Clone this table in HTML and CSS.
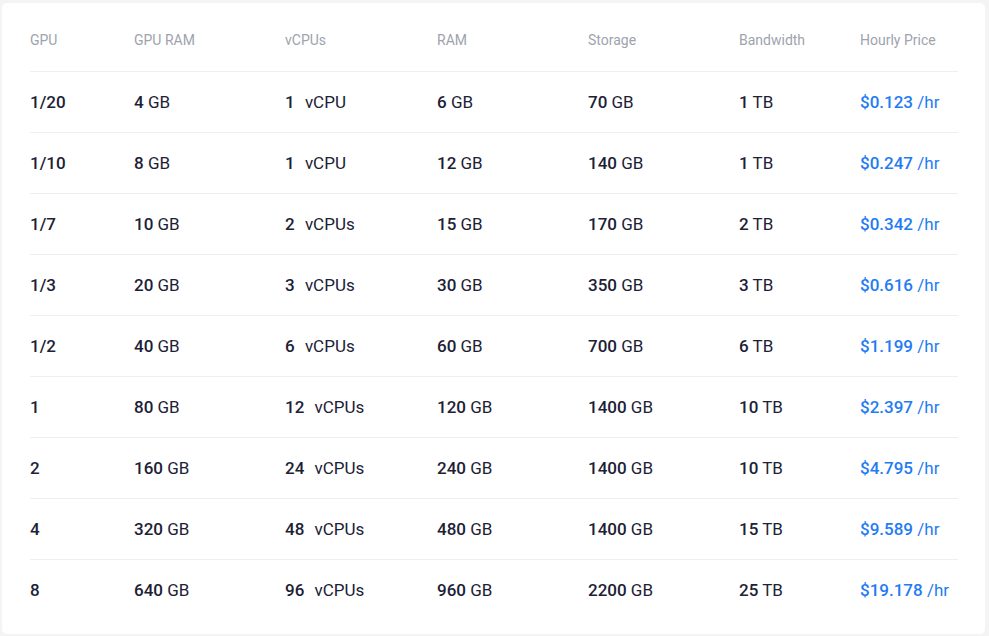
FILE: index.html
```html
<!DOCTYPE html>
<html lang="en">
<head>
<meta charset="utf-8">
<title>GPU Pricing</title>
<link rel="stylesheet" href="styles.css">
</head>
<body>
<div class="card">
  <table class="pricing">
    <colgroup>
      <col class="c-gpu"><col class="c-gram"><col class="c-vcpu"><col class="c-ram"><col class="c-sto"><col class="c-bw"><col class="c-price">
    </colgroup>
    <thead>
      <tr><th>GPU</th><th>GPU RAM</th><th>vCPUs</th><th>RAM</th><th>Storage</th><th>Bandwidth</th><th>Hourly Price</th></tr>
    </thead>
    <tbody>
      <tr><td class="strong">1/20</td><td><b>4</b> GB</td><td><b class="n">1</b> vCPU</td><td><b>6</b> GB</td><td><b>70</b> GB</td><td><b>1</b> TB</td><td class="price"><b>$0.123</b> /hr</td></tr>
      <tr><td class="strong">1/10</td><td><b>8</b> GB</td><td><b class="n">1</b> vCPU</td><td><b>12</b> GB</td><td><b>140</b> GB</td><td><b>1</b> TB</td><td class="price"><b>$0.247</b> /hr</td></tr>
      <tr><td class="strong">1/7</td><td><b>10</b> GB</td><td><b class="n">2</b> vCPUs</td><td><b>15</b> GB</td><td><b>170</b> GB</td><td><b>2</b> TB</td><td class="price"><b>$0.342</b> /hr</td></tr>
      <tr><td class="strong">1/3</td><td><b>20</b> GB</td><td><b class="n">3</b> vCPUs</td><td><b>30</b> GB</td><td><b>350</b> GB</td><td><b>3</b> TB</td><td class="price"><b>$0.616</b> /hr</td></tr>
      <tr><td class="strong">1/2</td><td><b>40</b> GB</td><td><b class="n">6</b> vCPUs</td><td><b>60</b> GB</td><td><b>700</b> GB</td><td><b>6</b> TB</td><td class="price"><b>$1.199</b> /hr</td></tr>
      <tr><td class="strong">1</td><td><b>80</b> GB</td><td><b class="n">12</b> vCPUs</td><td><b>120</b> GB</td><td><b>1400</b> GB</td><td><b>10</b> TB</td><td class="price"><b>$2.397</b> /hr</td></tr>
      <tr><td class="strong">2</td><td><b>160</b> GB</td><td><b class="n">24</b> vCPUs</td><td><b>240</b> GB</td><td><b>1400</b> GB</td><td><b>10</b> TB</td><td class="price"><b>$4.795</b> /hr</td></tr>
      <tr><td class="strong">4</td><td><b>320</b> GB</td><td><b class="n">48</b> vCPUs</td><td><b>480</b> GB</td><td><b>1400</b> GB</td><td><b>15</b> TB</td><td class="price"><b>$9.589</b> /hr</td></tr>
      <tr><td class="strong">8</td><td><b>640</b> GB</td><td><b class="n">96</b> vCPUs</td><td><b>960</b> GB</td><td><b>2200</b> GB</td><td><b>25</b> TB</td><td class="price"><b>$19.178</b> /hr</td></tr>
    </tbody>
  </table>
</div>
</body>
</html>
```
FILE: styles.css
```css
html, body {
  margin: 0;
  padding: 0;
  background: #f4f4f5;
}
body {
  font-family: Roboto, "Liberation Sans", sans-serif;
  padding: 3px 4px 2px 2px;
}
.card {
  background: #ffffff;
  border-radius: 5px;
  height: 631px;
  box-sizing: border-box;
  padding: 8px 27px 13px 28px;
}
.pricing {
  width: 928px;
  border-collapse: collapse;
  table-layout: fixed;
}
.c-gpu { width: 104px; }
.c-gram { width: 151px; }
.c-vcpu { width: 152px; }
.c-ram { width: 151px; }
.c-sto { width: 151px; }
.c-bw { width: 121px; }
.c-price { width: 98px; }
.pricing th {
  height: 60px;
  box-sizing: border-box;
  padding: 0 0 2px 0;
  text-align: left;
  font-weight: 400;
  font-size: 14px;
  color: #9ea3ad;
  border-bottom: 1px solid #eceef2;
  white-space: nowrap;
}
.pricing td {
  height: 60px;
  padding: 0;
  font-size: 17px;
  color: #1c2135;
  border-bottom: 1px solid #eceef2;
  white-space: nowrap;
}
.pricing tbody tr:last-child td {
  border-bottom: none;
}
.pricing b {
  font-weight: 500;
}
.pricing td.strong {
  font-weight: 500;
}
.pricing b.n {
  margin-right: 6px;
}
.pricing td.price {
  color: #1f7cf2;
}
```
